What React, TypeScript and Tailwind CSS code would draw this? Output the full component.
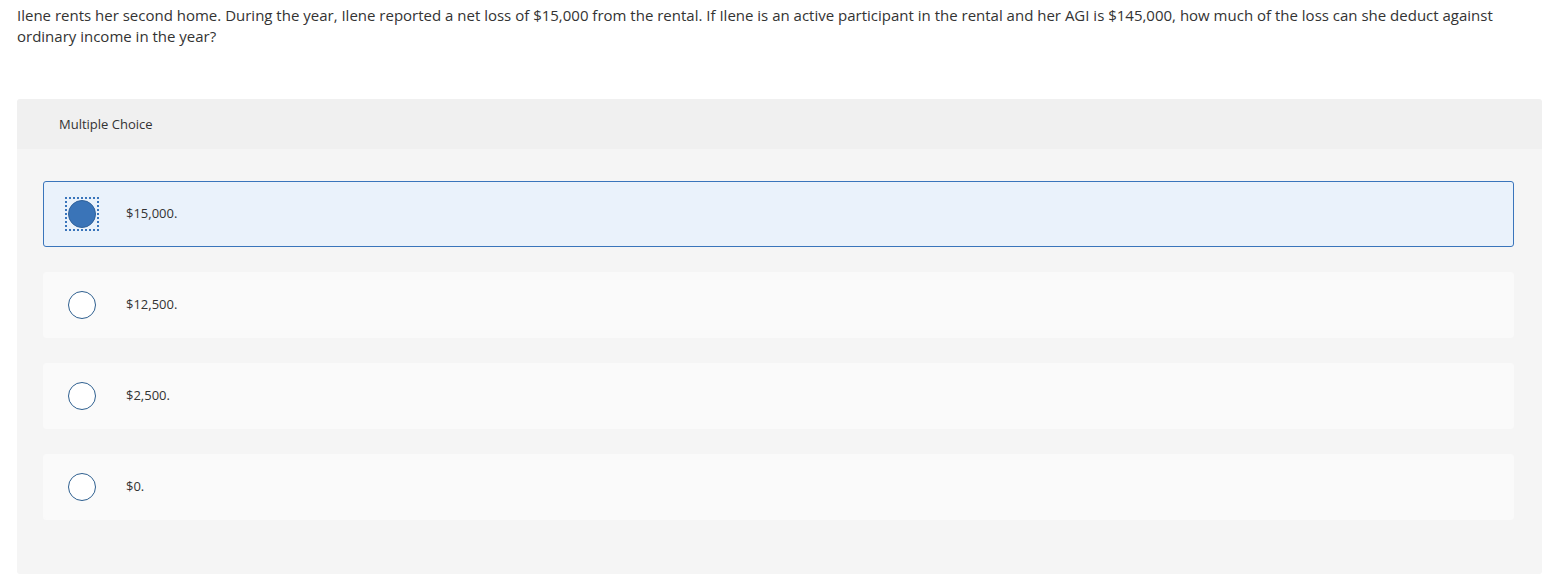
import { useState } from 'react';

const choices = ['$15,000.', '$12,500.', '$2,500.', '$0.'];

export default function App() {
  const [selected, setSelected] = useState(0);

  return (
    <div className="min-h-screen bg-white pl-[17px] pr-[14px] pt-[5px] font-['Open_Sans','Lato',sans-serif] text-[#333]">
      <p className="text-[15px] leading-[21px]">
        Ilene rents her second home. During the year, Ilene reported a net loss of $15,000 from the rental. If Ilene is an
        active participant in the rental and her AGI is $145,000, how much of the loss can she deduct against
        <br />
        ordinary income in the year?
      </p>

      <div className="mt-[52px] rounded-[3px] overflow-hidden">
        <div className="h-[50px] bg-[#f0f0f0] pl-[42px] pt-[2px] flex items-center text-[13px]">Multiple Choice</div>
        <div className="bg-[#f5f5f5] pl-[26px] pr-[28px] pt-[32px] pb-[54px] flex flex-col gap-[25px]">
          {choices.map((choice, i) => {
            const active = selected === i;
            return (
              <button
                key={choice}
                type="button"
                onClick={() => setSelected(i)}
                className={`h-[66px] w-full flex items-center pl-[21px] rounded-[3px] border text-left ${
                  active ? 'bg-[#eaf2fb] border-[#3a75bb]' : 'bg-[#fafafa] border-[#fafafa]'
                }`}
              >
                <span
                  className={`w-[34px] h-[34px] flex items-center justify-center outline-dotted outline-2 -outline-offset-2 ${
                    active ? 'outline-[#3a75bb]' : 'outline-transparent'
                  }`}
                >
                  <span
                    className={`w-[28px] h-[28px] rounded-full border-[1.5px] ${
                      active ? 'bg-[#3a74b8] border-[#2f619b]' : 'bg-white border-[#2e5f8f]'
                    }`}
                  />
                </span>
                <span className="ml-[27px] text-[13px]">{choice}</span>
              </button>
            );
          })}
        </div>
      </div>
    </div>
  );
}
